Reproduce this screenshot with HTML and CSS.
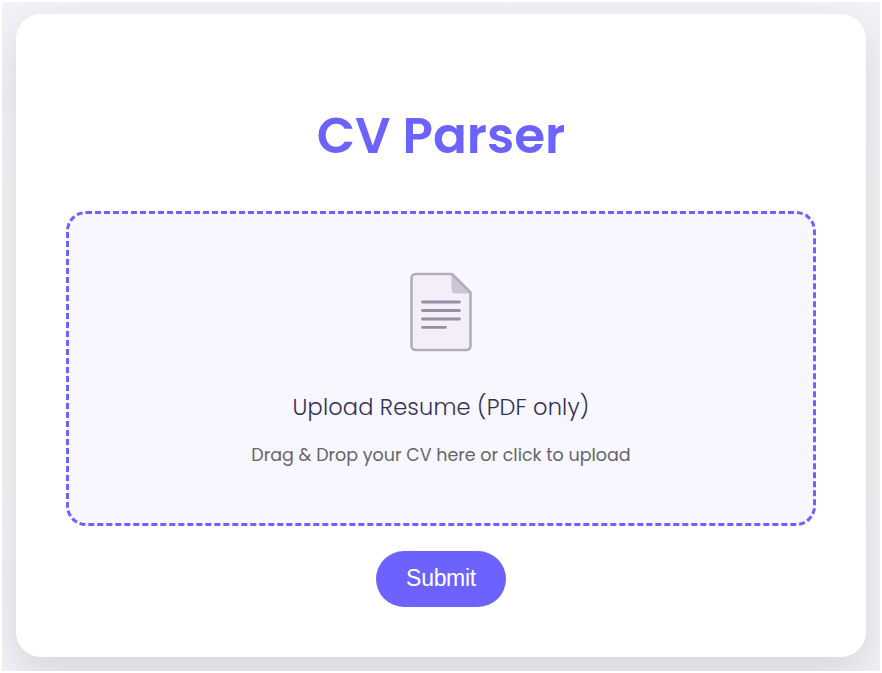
FILE: index.html
```html
<!DOCTYPE html>
<html lang="en">
<head>
<meta charset="utf-8">
<title>CV Parser</title>
<link rel="stylesheet" href="styles.css">
</head>
<body>
<div class="page">
  <main class="card">
    <h1 class="title">CV Parser</h1>
    <div class="dropzone">
      <svg class="icon" width="64" height="80" viewBox="0 0 64 80" aria-hidden="true">
        <path d="M6.500 2H43L61.500 20.500V73.500Q61.500 78 57 78H7Q2.500 78 2.500 73.500V6.500Q2.500 2 7 2Z" fill="#f3eef8"/>
        <path d="M42.500 2V17.500Q42.500 21.500 46.500 21.500H61.500Z" fill="#cdc5d7"/>
        <path d="M7 2H43L61.500 20.500V73.500Q61.500 78 57 78H7Q2.500 78 2.500 73.500V6.500Q2.500 2 7 2Z" fill="none" stroke="#b4abbf" stroke-width="2.600" stroke-linejoin="round"/>
        <path d="M13.500 30H50.500M13.500 38.500H50.500M13.500 47H50.500M13.500 55.300H36.500" fill="none" stroke="#998da8" stroke-width="2.800" stroke-linecap="round"/>
      </svg>
      <p class="label">Upload Resume (PDF only)</p>
      <p class="hint">Drag &amp; Drop your CV here or click to upload</p>
    </div>
    <button class="submit" type="button">Submit</button>
  </main>
</div>
</body>
</html>
```
FILE: styles.css
```css
* { box-sizing: border-box; }
body { margin: 0; background: #fff; font-family: Poppins, Inter, sans-serif; }
.page {
  height: 673px;
  border: 2px solid #fff;
  padding: 12px 14px;
  background: linear-gradient(#f2f3f8, #f3f5f7 30%, #f3f5f7 70%, #f2f3f8);
  overflow: hidden;
}
.card {
  height: 643px;
  padding: 88px 50px 50px;
  display: flex;
  flex-direction: column;
  align-items: center;
  background: #fff;
  border-radius: 25px;
  box-shadow: 0 15px 45px rgba(0, 0, 0, 0.13);
}
.title {
  margin: 0 0 41px;
  font-size: 50px;
  line-height: 68px;
  font-weight: 600;
  color: #6c63ff;
  white-space: nowrap;
}
.dropzone {
  width: 100%;
  height: 315px;
  flex: none;
  display: flex;
  flex-direction: column;
  align-items: center;
  padding-top: 58px;
  border: 3px dashed #6c63ff;
  border-radius: 20px;
  background: #f8f6ff;
}
.icon { display: block; }
.label, .hint { margin: 0; white-space: nowrap; }
.label {
  margin-top: 37px;
  font-size: 22.500px;
  line-height: 36px;
  font-weight: 300;
  letter-spacing: 0.16px;
  color: #333052;
}
.hint {
  margin-top: 16px;
  font-size: 17.500px;
  line-height: 28px;
  color: #666;
}
.submit {
  width: 130px;
  height: 56px;
  margin-top: 25px;
  padding: 0 0 2px;
  border: 0;
  border-radius: 28px;
  background: #6c63ff;
  color: #fff;
  font: 23px/1 "Liberation Sans", sans-serif;
  letter-spacing: -0.3px;
}
```
